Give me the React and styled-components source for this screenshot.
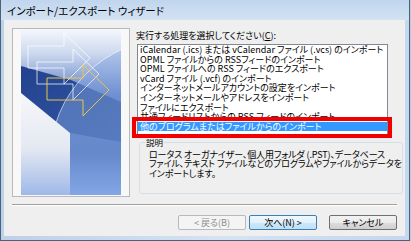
import React from 'react';
import styled, { createGlobalStyle } from 'styled-components';

const jp = `"Noto Sans CJK JP", "Noto Sans", sans-serif`;

const GlobalStyle = createGlobalStyle`
  html, body {
    margin: 0;
    padding: 0;
    background: #b9cbe0;
  }
  body {
    font-family: ${jp};
    font-feature-settings: "palt";
  }
`;

const Window = styled.div`
  width: 410px;
  height: 241px;
  box-sizing: border-box;
  display: flex;
  flex-direction: column;
  background: linear-gradient(to right, #bcd1ea, #d4e3f4 55%, #c3d7ee);
  border: 1px solid #4d6179;
  border-top: none;
`;

const TitleBar = styled.div`
  height: 20px;
  flex: none;
  display: flex;
  align-items: center;
  padding-left: 6px;
  font-size: 10.5px;
  color: #000;
  background: linear-gradient(to bottom, #c0d5ee, #d3e2f3);
`;

const Client = styled.div`
  flex: 1;
  margin: 0 4px 4px 3px;
  padding: 8px 8px 0 8px;
  display: flex;
  flex-direction: column;
  background: #efefef;
`;

const TopRow = styled.div`
  display: flex;
  gap: 6px;
  height: 169px;
`;

const ImageFrame = styled.div`
  width: 119px;
  height: 169px;
  box-sizing: border-box;
  border: 1px solid #b9b9b9;
  padding: 1px 8px 0;
  background: #f8f8f8;
`;

const RightCol = styled.div`
  position: relative;
  flex: 1;
  display: flex;
  flex-direction: column;
  padding-top: 3px;
  font-size: 9px;
`;

const Label = styled.div`
  line-height: 10px;
  color: #000;
  white-space: nowrap;
  u { text-decoration: underline; }
`;

const ListBox = styled.div`
  margin: 3px 0 0 1px;
  width: 251px;
  height: 94px;
  box-sizing: border-box;
  border: 1px solid #828790;
  background: #fff;
  overflow: hidden;
`;

const Item = styled.div`
  height: 9.6px;
  line-height: 9.6px;
  padding-left: 2px;
  white-space: nowrap;
  color: ${p => (p.$selected ? '#fff' : '#000')};
  background: ${p => (p.$selected ? '#3399ff' : 'transparent')};
`;

const Highlight = styled.div`
  position: absolute;
  left: -4px;
  top: 89px;
  width: 260px;
  height: 21px;
  box-sizing: border-box;
  border: 4px solid #f00000;
  pointer-events: none;
`;

const Group = styled.fieldset`
  margin: 0 0 0 3px;
  width: 248px;
  height: 56px;
  box-sizing: border-box;
  border: 1px solid #d5dfe5;
  border-radius: 3px;
  padding: 0 0 0 9px;
`;

const Legend = styled.legend`
  padding: 0 1px;
  margin-left: -4px;
  font-size: 8.5px;
  line-height: 9px;
  color: #000;
`;

const Description = styled.div`
  margin-top: 3px;
  line-height: 9.3px;
  letter-spacing: -0.12px;
  color: #000;
  white-space: nowrap;
`;

const Separator = styled.div`
  margin-top: 7px;
  height: 0;
  border-top: 1px solid #a0a0a0;
  border-bottom: 1px solid #ffffff;
`;

const ButtonRow = styled.div`
  display: flex;
  justify-content: flex-end;
  margin-top: 9px;
  gap: 3px;
`;

const Button = styled.button`
  width: 68px;
  height: 15px;
  padding: 0;
  box-sizing: border-box;
  margin-left: ${p => p.$gapLeft || 0}px;
  font-family: ${jp};
  font-feature-settings: "palt";
  font-size: 9px;
  line-height: 12px;
  border-radius: 2px;
  color: ${p => (p.disabled ? '#8d8d8d' : '#000')};
  border: 1px solid ${p => (p.$primary ? '#3c7fb1' : p.disabled ? '#b6babd' : '#707070')};
  background: ${p =>
    p.$primary
      ? 'linear-gradient(to bottom, #f0f8fd 0%, #e1f1fb 50%, #cde8f9 51%, #bfe1f7 100%)'
      : p.disabled
      ? '#f4f4f4'
      : 'linear-gradient(to bottom, #f2f2f2 0%, #ebebeb 50%, #dddddd 51%, #cfcfcf 100%)'};
`;

const Illustration = () => (
  <svg width="100" height="165" viewBox="0 0 100 165" style={{ display: 'block' }}>
    <defs>
      <linearGradient id="sky" x1="0" y1="0" x2="0" y2="1">
        <stop offset="0" stopColor="#f3f6fc" />
        <stop offset="0.14" stopColor="#cdd9ef" />
        <stop offset="0.4" stopColor="#5a7dc3" />
        <stop offset="0.75" stopColor="#4d71bb" />
        <stop offset="1" stopColor="#82a8ea" />
      </linearGradient>
      <linearGradient id="band" x1="0" y1="0" x2="1" y2="1">
        <stop offset="0" stopColor="#23428e" />
        <stop offset="1" stopColor="#3257a6" />
      </linearGradient>
      <linearGradient id="paper" x1="0" y1="0" x2="0" y2="1">
        <stop offset="0" stopColor="#f7f7f9" />
        <stop offset="0.55" stopColor="#e3e8f2" />
        <stop offset="1" stopColor="#9fb8e8" />
      </linearGradient>
    </defs>
    <rect width="100" height="165" fill="url(#sky)" />
    <polygon points="0,36 50,50 100,72 100,112 49,103 0,63" fill="url(#band)" />
    <circle cx="150" cy="130" r="121" fill="#86a6e0" fillOpacity="0.45" stroke="#ffffff" strokeOpacity="0.6" />
    <polygon points="0,63 49,103 49,165 0,165" fill="url(#paper)" />
    <g fill="none" stroke="#ffffff" strokeWidth="0.9" strokeOpacity="0.8">
      <path d="M7,16 H43 V3 L69,28 L43,54 V38 H7 Z" />
      <path d="M16,32 H52 V19 L78,44 L52,70 V54 H16 Z" />
    </g>
    <path d="M26,48 H62 V35 L88,60 L62,86 V70 H26 Z" fill="none" stroke="#e9c547" strokeWidth="1" />
  </svg>
);

const items = [
  'iCalendar (.ics) または vCalendar ファイル (.vcs) のインポート',
  'OPML ファイルからの RSSフィードのインポート',
  'OPML ファイルへの RSS フィードのエクスポート',
  'vCard ファイル (.vcf) のインポート',
  'インターネットメールアカウントの設定をインポート',
  'インターネットメールやアドレスをインポート',
  'ファイルにエクスポート',
  '共通フィードリストからの RSS フィードのインポート',
  '他のプログラムまたはファイルからのインポート',
];

const App = () => {
  return (
    <>
      <GlobalStyle />
      <Window>
        <TitleBar>インポート/エクスポート ウィザード</TitleBar>
        <Client>
          <TopRow>
            <ImageFrame>
              <Illustration />
            </ImageFrame>
            <RightCol>
              <Label>
                実行する処理を選択してください(<u>C</u>):
              </Label>
              <ListBox>
                {items.map((text, i) => (
                  <Item key={text} $selected={i === items.length - 1}>
                    {text}
                  </Item>
                ))}
              </ListBox>
              <Group>
                <Legend>説明</Legend>
                <Description>
                  ロータス オーガナイザー、個人用フォルダ (.PST)、データベース
                  <br />
                  ファイル、テキスト ファイルなどのプログラムやファイルからデータを
                  <br />
                  インポートします。
                </Description>
              </Group>
              <Highlight />
            </RightCol>
          </TopRow>
          <Separator />
          <ButtonRow>
            <Button disabled>&lt; 戻る(B)</Button>
            <Button $primary>次へ(N) &gt;</Button>
            <Button $gapLeft={9}>キャンセル</Button>
          </ButtonRow>
        </Client>
      </Window>
    </>
  );
};

export default App;
